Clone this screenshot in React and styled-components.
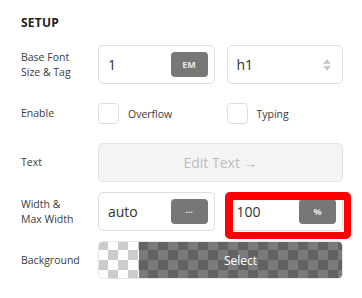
import React from "react";
import styled, { createGlobalStyle } from "styled-components";

const Global = createGlobalStyle`
  html, body { margin: 0; padding: 0; background: #fff; }
  body { font-family: "Open Sans", "Noto Sans", sans-serif; color: #333; }
`;

const Panel = styled.div`
  width: 362px;
  height: 298px;
  box-sizing: border-box;
  padding: 14px 19px 0 21px;
  background: #fff;
`;

const Title = styled.h2`
  margin: 0 0 13px 0;
  font-size: 12px;
  line-height: 18px;
  font-weight: 700;
  color: #222;
  letter-spacing: 0.2px;
`;

const Grid = styled.div`
  display: grid;
  grid-template-columns: 65px 1fr 1fr;
  column-gap: 12px;
  row-gap: 10px;
  grid-auto-rows: 39px;
`;

const Label = styled.div`
  align-self: center;
  font-size: 10.5px;
  line-height: 15px;
  color: #3a3a3a;
  white-space: nowrap;
`;

const Field = styled.div`
  position: relative;
  box-sizing: border-box;
  height: 39px;
  border: 1px solid #dedede;
  border-radius: 5px;
  background: #fff;
  display: flex;
  align-items: center;
  justify-content: space-between;
  padding: 0 6px 0 9px;
  font-size: 14px;
  color: #333;
`;

const UnitButton = styled.div`
  width: 37px;
  height: 25px;
  border-radius: 4px;
  background: #777;
  color: #e8e8e8;
  font-size: 9px;
  font-weight: 700;
  display: flex;
  align-items: center;
  justify-content: center;
`;

const Arrows = styled.svg`
  width: 10px;
  height: 12px;
  margin-right: 4px;
`;

const CheckCell = styled.label`
  display: flex;
  align-items: center;
  gap: 9px;
  font-size: 10.5px;
  color: #3a3a3a;
`;

const Box = styled.span`
  width: 21px;
  height: 21px;
  box-sizing: border-box;
  border: 1px solid #dedede;
  border-radius: 4px;
  background: #fff;
`;

const EditButton = styled.div`
  grid-column: 2 / 4;
  box-sizing: border-box;
  border: 1px solid #e2e2e2;
  border-radius: 5px;
  background: #f4f4f4;
  color: #bdbdbd;
  font-size: 14px;
  display: flex;
  align-items: center;
  justify-content: center;
`;

const Highlight = styled.div`
  position: absolute;
  left: -3px;
  top: -1px;
  width: 126px;
  height: 47px;
  box-sizing: border-box;
  border-style: solid;
  border-color: #ff0000;
  border-width: 8px 7px 7px 8px;
  border-radius: 5px;
  pointer-events: none;
`;

const Swatch = styled.div`
  grid-column: 2 / 4;
  height: 38px;
  box-sizing: border-box;
  border: 1px solid #e4e4e4;
  border-radius: 5px;
  overflow: hidden;
  display: flex;
  background: conic-gradient(#fff 0 25%, #ccc 0 50%, #fff 0 75%, #ccc 0) -1px -2px / 20px 20px;
`;

const Preview = styled.div`
  width: 40px;
`;

const SelectPart = styled.div`
  flex: 1;
  background: rgba(0, 0, 0, 0.52);
  color: #fff;
  font-size: 12px;
  display: flex;
  align-items: center;
  justify-content: center;
`;

export default function App() {
  return (
    <>
      <Global />
      <Panel>
        <Title>SETUP</Title>
        <Grid>
          <Label>Base Font<br />Size &amp; Tag</Label>
          <Field>
            <span>1</span>
            <UnitButton>EM</UnitButton>
          </Field>
          <Field>
            <span>h1</span>
            <Arrows viewBox="0 0 10 12">
              <path d="M5 0.5 L9 4.8 L1 4.8 Z" fill="#c4c4c4" />
              <path d="M5 11.5 L9 7.2 L1 7.2 Z" fill="#c4c4c4" />
            </Arrows>
          </Field>

          <Label>Enable</Label>
          <CheckCell><Box />Overflow</CheckCell>
          <CheckCell><Box />Typing</CheckCell>

          <Label>Text</Label>
          <EditButton>Edit Text →</EditButton>

          <Label>Width &amp;<br />Max Width</Label>
          <Field>
            <span>auto</span>
            <UnitButton>···</UnitButton>
          </Field>
          <Field>
            <span>100</span>
            <UnitButton>%</UnitButton>
            <Highlight />
          </Field>

          <Label>Background</Label>
          <Swatch>
            <Preview />
            <SelectPart>Select</SelectPart>
          </Swatch>
        </Grid>
      </Panel>
    </>
  );
}
